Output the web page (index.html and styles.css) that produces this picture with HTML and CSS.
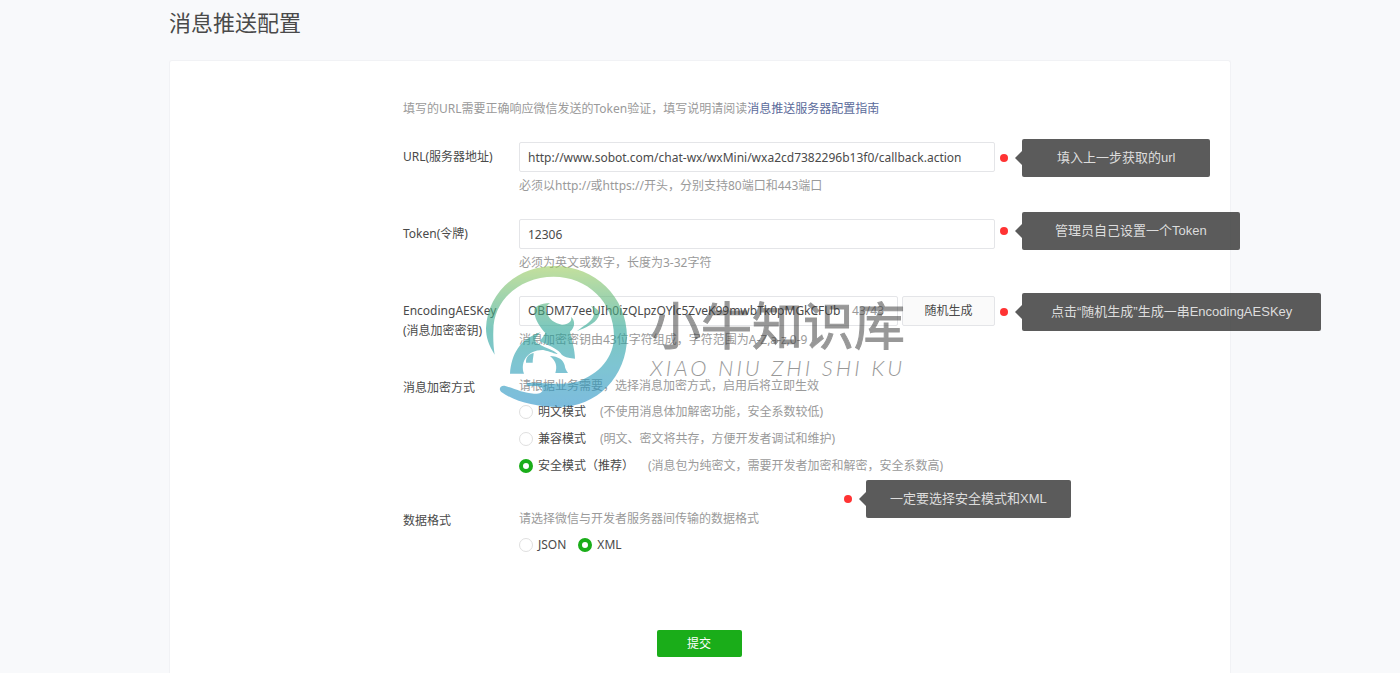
FILE: index.html
```html
<!DOCTYPE html>
<html lang="zh-CN">
<head>
<meta charset="utf-8">
<title>消息推送配置</title>
<link rel="stylesheet" href="styles.css">
</head>
<body>
<main class="page">
  <h1 class="page-title">消息推送配置</h1>
  <section class="card">
    <form class="form">
      <p class="intro">填写的URL需要正确响应微信发送的Token验证，填写说明请阅读<a class="guide" href="#">消息推送服务器配置指南</a></p>

      <div class="row">
        <label class="label" for="url">URL(服务器地址)</label>
        <div class="field">
          <input class="input" id="url" type="text" value="http://www.sobot.com/chat-wx/wxMini/wxa2cd7382296b13f0/callback.action">
          <p class="help">必须以http://或https://开头，分别支持80端口和443端口</p>
        </div>
        <div class="callout"><i class="dot"></i><span class="bubble">填入上一步获取的url</span></div>
      </div>

      <div class="row">
        <label class="label" for="token">Token(令牌)</label>
        <div class="field">
          <input class="input" id="token" type="text" value="12306">
          <p class="help">必须为英文或数字，长度为3-32字符</p>
        </div>
        <div class="callout callout-token"><i class="dot"></i><span class="bubble bubble-mid">管理员自己设置一个Token</span></div>
      </div>

      <div class="row">
        <label class="label" for="aes">EncodingAESKey<br>(消息加密密钥)</label>
        <div class="field">
          <div class="key-line">
            <div class="counted">
              <input class="counted-input" id="aes" type="text" value="OBDM77eeUIh0izQLpzOYlc5ZveK99mwbTk0pMGkCFUb">
              <span class="count">43/43</span>
            </div>
            <button class="random" type="button">随机生成</button>
          </div>
          <p class="help">消息加密密钥由43位字符组成，字符范围为A-Z,a-z,0-9</p>
        </div>
        <div class="callout"><i class="dot"></i><span class="bubble bubble-snug">点击“随机生成”生成一串EncodingAESKey</span></div>

        <div class="watermark">
          <svg class="logo" viewBox="0 0 480 465" aria-hidden="true">
            <defs>
              <linearGradient id="tint" gradientUnits="userSpaceOnUse" x1="0" y1="18" x2="0" y2="441">
                <stop offset="0" stop-color="#9dcc5c"/>
                <stop offset=".45" stop-color="#25a394"/>
                <stop offset=".7" stop-color="#2a9fb5"/>
                <stop offset="1" stop-color="#2690c8"/>
              </linearGradient>
            </defs>
            <g fill="url(#tint)">
              <path d="M44 284C26 255 18 232 18 205C22 100 110 18 224 18C345 18 441 112 441 230C441 350 350 441 236 441C165 441 105 425 64 396C54 386 62 375 76 378C105 387 132 400 162 401C178 402 188 397 188 389C188 380 175 378 150 378C135 378 137 368 149 368C195 367 240 377 290 366C360 342 402 290 402 228C402 126 322 50 221 50C120 50 40 120 40 212C39 240 41 264 44 284Z"/>
              <path d="M210 129C182 130 160 140 163 155C165 182 182 203 196 219C190 232 182 238 180 244C205 256 228 264 242 280C247 288 254 293 285 296C285 270 275 239 270 215C286 203 286 180 273 171C277 184 266 193 246 194C225 192 205 176 202 160C196 150 196 139 210 129Z"/>
              <path d="M333 138C354 144 363 157 355 171C344 192 318 202 290 214C310 199 332 186 339 172C345 160 342 148 333 138Z"/>
              <path d="M90 341C94 285 118 237 182 217C170 228 162 238 168 247C188 262 218 268 233 282C224 282 212 275 190 270C146 268 119 303 132 341Z"/>
              <path d="M161 279C146 282 137 292 138 308H158C158 295 161 287 161 279Z"/>
              <path d="M210 288C235 289 251 300 254 316C255 326 259 333 264 339H226C232 320 229 304 210 288Z"/>
            </g>
          </svg>
          <div class="wordmark">
            <span class="brand">小牛知识库</span>
            <span class="pinyin">XIAO NIU ZHI SHI KU</span>
          </div>
        </div>
      </div>

      <div class="row row-mode" role="radiogroup" aria-labelledby="mode-label">
        <span class="label" id="mode-label">消息加密方式</span>
        <div class="field">
          <p class="prompt">请根据业务需要，选择消息加密方式，启用后将立即生效</p>
          <div class="options">
            <label class="option"><input class="radio" type="radio" name="mode"><span>明文模式</span><span class="note">(不使用消息体加解密功能，安全系数较低)</span></label>
            <label class="option"><input class="radio" type="radio" name="mode"><span>兼容模式</span><span class="note">(明文、密文将共存，方便开发者调试和维护)</span></label>
            <label class="option"><input class="radio" type="radio" name="mode" checked><span>安全模式（推荐）</span><span class="note">(消息包为纯密文，需要开发者加密和解密，安全系数高)</span></label>
          </div>
        </div>
        <div class="callout callout-mode"><i class="dot"></i><span class="bubble bubble-tight">一定要选择安全模式和XML</span></div>
      </div>

      <div class="row" role="radiogroup" aria-labelledby="format-label">
        <span class="label" id="format-label">数据格式</span>
        <div class="field">
          <p class="prompt">请选择微信与开发者服务器间传输的数据格式</p>
          <div class="options options-inline">
            <label class="option"><input class="radio" type="radio" name="format"><span>JSON</span></label>
            <label class="option"><input class="radio" type="radio" name="format" checked><span>XML</span></label>
          </div>
        </div>
      </div>

      <div class="actions"><button class="submit" type="submit">提交</button></div>
    </form>
  </section>
</main>
</body>
</html>
```
FILE: styles.css
```css
* {
  box-sizing: border-box;
}

html {
  height: 100%;
}

body {
  margin: 0;
  height: 100%;
  overflow: hidden;
  background: #f8f9fb;
  color: #4a4a4a;
  font: 12px/20px "Noto Sans", "Noto Sans CJK SC", sans-serif;
}

p,
h1 {
  margin: 0;
  font-weight: 400;
}

input,
button {
  font: inherit;
  color: inherit;
}

.page {
  display: flex;
  flex-direction: column;
  min-height: 100%;
  max-width: 1062px;
  margin: 0 auto;
}

.page-title {
  padding: 6px 0 22px;
  font-size: 22px;
  line-height: 32px;
}

.card {
  flex: 1;
  padding: 38px 20px 16px;
  background: #fff;
  border: 1px solid #f1f2f5;
  border-bottom: 0;
  border-radius: 3px 3px 0 0;
}

.form {
  max-width: 594px;
  margin: 0 auto;
  padding-right: 2px;
}

.intro {
  margin-bottom: 23px;
  color: #9a9a9a;
}

.guide {
  color: #5b6b9b;
  text-decoration: none;
}

.row {
  position: relative;
  display: grid;
  grid-template-columns: 116px 1fr;
  margin-bottom: 23px;
}

.row-mode {
  margin-bottom: 30px;
}

.label {
  padding-top: 5px;
  white-space: nowrap;
}

.input,
.counted {
  width: 100%;
  height: 30px;
  padding: 0 8px;
  background: #fff;
  border: 1px solid #e4e5e8;
  border-radius: 2px;
}

.help {
  padding-top: 4px;
  color: #9a9a9a;
}

.key-line {
  display: flex;
  gap: 4px;
}

.counted {
  display: flex;
  flex: 1;
  align-items: center;
  padding-right: 13px;
}

.counted-input {
  flex: 1;
  min-width: 0;
  padding: 0;
  border: 0;
  background: none;
}

.count {
  color: #9a9a9a;
}

.random {
  width: 93px;
  height: 30px;
  background: #fafafa;
  border: 1px solid #e4e5e8;
  border-radius: 2px;
}

.prompt {
  padding-top: 3px;
  color: #9a9a9a;
}

.options {
  display: flex;
  flex-direction: column;
  gap: 7px;
  padding-top: 6px;
}

.options-inline {
  flex-direction: row;
  gap: 12px;
}

.option {
  display: flex;
  align-items: center;
}

.radio {
  appearance: none;
  width: 14px;
  height: 14px;
  margin: 0 5px 0 0;
  background: #fff;
  border: 1px solid #dfdfdf;
  border-radius: 50%;
}

.radio:checked {
  border: 4px solid #1aad19;
}

.note {
  margin-left: 14px;
  color: #9a9a9a;
}

.actions {
  padding-top: 52px;
  text-align: center;
}

.submit {
  width: 85px;
  height: 27px;
  padding: 0;
  background: #1aad19;
  border: 0;
  border-radius: 2px;
  color: #fff;
}

.callout {
  position: absolute;
  z-index: 2;
  top: -3px;
  left: calc(100% + 5px);
  display: flex;
  align-items: center;
  gap: 14px;
}

.callout-token {
  top: -7px;
}

.callout-mode {
  top: 107px;
  left: 441px;
}

.dot {
  width: 8px;
  height: 8px;
  background: #f33;
  border-radius: 50%;
}

.bubble {
  position: relative;
  padding: 9px 35px;
  background: rgba(50, 50, 50, .8);
  border-radius: 2px;
  color: #ddd;
  font: 13px/20px "Liberation Sans", "Noto Sans CJK SC", sans-serif;
  white-space: nowrap;
}

.bubble::before {
  content: "";
  position: absolute;
  top: 12px;
  left: -7px;
  border: 7px solid transparent;
  border-left: 0;
  border-right-color: rgba(50, 50, 50, .8);
}

.bubble-mid {
  padding: 9px 33px;
}

.bubble-snug {
  padding: 9px 29px;
}

.bubble-tight {
  padding: 9px 24px;
}

.watermark {
  position: absolute;
  z-index: 1;
  top: -36px;
  left: 77px;
  display: flex;
  align-items: flex-start;
  gap: 10px;
  pointer-events: none;
}

.logo {
  width: 160px;
  height: 155px;
  opacity: .6;
}

.wordmark {
  display: flex;
  flex-direction: column;
  padding-top: 30px;
  color: #333;
  opacity: .5;
  white-space: nowrap;
}

.brand {
  font: 51px/66px "Noto Sans CJK SC", sans-serif;
  -webkit-text-stroke: 1px #333;
}

.pinyin {
  font: italic 300 22px/24px Lato, sans-serif;
  letter-spacing: 3px;
}
```
